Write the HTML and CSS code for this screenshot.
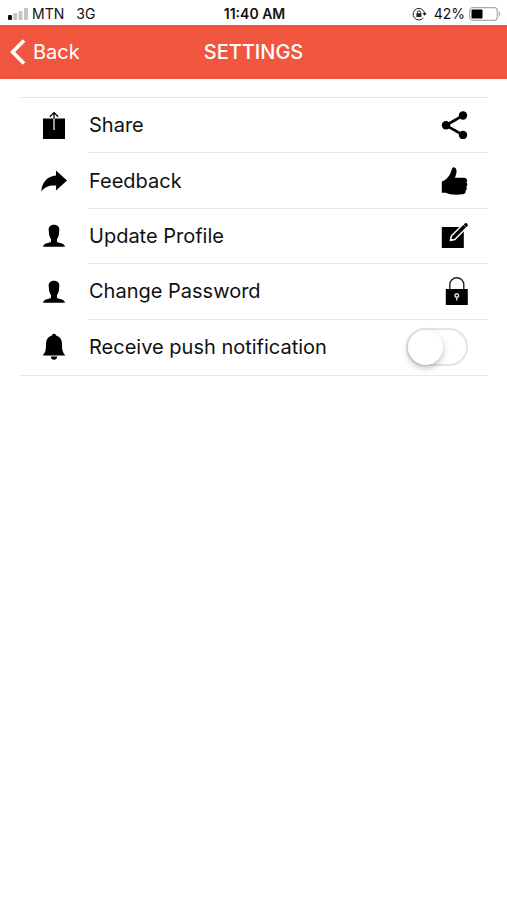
FILE: index.html
```html
<!DOCTYPE html>
<html lang="en">
<head>
    <meta charset="UTF-8">
    <meta name="viewport" content="width=device-width, initial-scale=1.0">
    <title>Settings</title>
    <link rel="stylesheet" href="styles.css">
</head>
<body>
    <div class="status-bar">
        <div class="status-left">
            <svg width="20" height="12" viewBox="0 0 20 12">
                <rect x="0" y="7" width="4" height="5" rx="1" fill="#111"/>
                <rect x="5.3" y="5" width="4" height="7" rx="1" fill="#c4c4c4"/>
                <rect x="10.6" y="3" width="4" height="9" rx="1" fill="#c4c4c4"/>
                <rect x="16" y="0" width="4" height="12" rx="1" fill="#c4c4c4"/>
            </svg>
            <span class="carrier">MTN</span>
            <span>3G</span>
        </div>
        <div class="status-time">11:40 AM</div>
        <div class="status-right">
            <svg width="15" height="14" viewBox="0 0 15 14" fill="none" stroke="#222">
                <path d="M11.3 11A5.8 5.8 0 1 1 12.6 6"/>
                <path d="M10.4 6h4.4l-2.2 2.8z" fill="#222" stroke="none"/>
                <rect x="4.4" y="6.2" width="5" height="3.8" fill="#222" stroke="none"/>
                <path d="M5.4 6.5V5.2a1.5 1.5 0 0 1 3 0v1.3"/>
            </svg>
            <span class="battery-text">42%</span>
            <svg width="32" height="14" viewBox="0 0 32 14">
                <rect x="0.7" y="0.7" width="27.6" height="12.6" rx="3" fill="#fff" stroke="#aaa" stroke-width="1.2"/>
                <rect x="2.5" y="2.5" width="11" height="9" rx="1" fill="#000"/>
                <path d="M29.8 4.6c2 .8 2 4 0 4.8z" fill="#aaa"/>
            </svg>
        </div>
    </div>

    <header class="header">
        <a href="#" class="back">
            <svg width="16" height="26" viewBox="0 0 16 26" fill="none" stroke="#fff" stroke-width="3.6">
                <path d="M14 1.5L2.6 13L14 24.5"/>
            </svg>
            Back
        </a>
        <h1>SETTINGS</h1>
    </header>

    <main>
        <ul class="settings">
            <li>
                <svg class="icon" viewBox="0 0 28 28">
                    <rect x="3" y="6.5" width="22" height="20.5"/>
                    <path d="M14 18V6.5" fill="none" stroke="#fff" stroke-width="1.2"/>
                    <path d="M14 6.5V0.8M9.8 4.8L14 0.6l4.2 4.2" fill="none" stroke="#000" stroke-width="1.3"/>
                </svg>
                <a href="#" class="row">
                    Share
                    <svg class="icon" viewBox="0 0 28 28">
                        <path d="M23 4.5L6 14.3L23 24" fill="none" stroke="#000" stroke-width="2.6"/>
                        <circle cx="23" cy="4.5" r="4.2"/>
                        <circle cx="6" cy="14.3" r="4.2"/>
                        <circle cx="23" cy="24" r="4.2"/>
                    </svg>
                </a>
            </li>
            <li>
                <svg class="icon" viewBox="0 0 28 28">
                    <path d="M16 3.5L27 13.5L16 23.5V18.5C9.5 18 5 19.5 1.2 24.5C2 15 7.5 9 16 8.5z"/>
                </svg>
                <a href="#" class="row">
                    Feedback
                    <svg class="icon" viewBox="0 0 28 28">
                        <path d="M1.8 14.5C6 13.5 10 8.5 11.5 3.5C12 .5 13 0 14.5.4C17.5 1.5 16.8 6.5 14.8 10.8H24C27 10.8 28 14 26.3 15.3C27.8 16.5 27.6 18.8 26.3 19.7C27.3 21 26.8 23 25.5 23.6C26.1 25.5 25 27 22.5 27.3C16 28.3 9 27.5 5.5 25.8H1.8z"/>
                    </svg>
                </a>
            </li>
            <li>
                <svg class="icon" viewBox="0 0 28 28">
                    <path d="M14 2.8C17.8 2.8 19.5 5 19.3 8.5L18.9 12.5C18.6 14.5 17.5 16 17 17.5V19.7C18 21.3 24.5 20.5 25 24.8H3C3.5 20.5 10 21.3 11 19.7V17.5C10.5 16 9.4 14.5 9.1 12.5L8.7 8.5C8.5 5 10.2 2.8 14 2.8z"/>
                </svg>
                <a href="#" class="row">
                    Update Profile
                    <svg class="icon" viewBox="0 0 28 28">
                        <rect x="1.8" y="5" width="22" height="21"/>
                        <path d="M10.5 18.3L11.3 14L23.5 1.8L27 5.3L14.8 17.5z" fill="#000" stroke="#fff" stroke-width="1.5"/>
                        <path d="M23.8 2.6L25.3 1.1Q28.4 1 27.6 4L26.2 5.2z"/>
                    </svg>
                </a>
            </li>
            <li>
                <svg class="icon" viewBox="0 0 28 28">
                    <path d="M14 2.8C17.8 2.8 19.5 5 19.3 8.5L18.9 12.5C18.6 14.5 17.5 16 17 17.5V19.7C18 21.3 24.5 20.5 25 24.8H3C3.5 20.5 10 21.3 11 19.7V17.5C10.5 16 9.4 14.5 9.1 12.5L8.7 8.5C8.5 5 10.2 2.8 14 2.8z"/>
                </svg>
                <a href="#" class="row">
                    Change Password
                    <svg class="icon" viewBox="0 0 28 28">
                        <path d="M9.8 12.5V7.5a7 6.8 0 0 1 14 0v5" fill="none" stroke="#222" stroke-width="1.4"/>
                        <rect x="5.8" y="12" width="22" height="16"/>
                        <circle cx="16.8" cy="18.5" r="1.8" fill="none" stroke="#ddd" stroke-width="1.4"/>
                        <path d="M16.8 20.5v3" stroke="#ddd" stroke-width="1.4"/>
                    </svg>
                </a>
            </li>
            <li>
                <svg class="icon" viewBox="0 0 28 28">
                    <path d="M14 .8C15.3 .8 15.9 1.5 16 2.5C20 3.5 22 6.8 22 11C22 16.5 22.5 19.8 25.5 22.5H2.5C5.5 19.8 6 16.5 6 11C6 6.8 8 3.5 12 2.5C12.1 1.5 12.7 .8 14 .8z"/>
                    <path d="M10.8 23.6H17.2C17 25.8 15.8 26.8 14 26.8S11 25.8 10.8 23.6z"/>
                </svg>
                <label class="row" for="push">
                    Receive push notification
                    <input type="checkbox" id="push" class="switch">
                </label>
            </li>
        </ul>
    </main>
</body>
</html>
```

FILE: styles.css
```css
body {
    margin: 0;
    background-color: #fff;
    color: #111;
    font-family: Inter, "Liberation Sans", sans-serif;
}

.status-bar {
    display: grid;
    grid-template-columns: 1fr auto 1fr;
    align-items: center;
    height: 25px;
    padding: 2px 6px 0 8px;
    box-sizing: border-box;
    font-size: 14px;
}

.status-left,
.status-right {
    display: flex;
    align-items: center;
}

.carrier {
    margin: 0 12px 0 4px;
}

.status-time {
    font-weight: 600;
}

.status-right {
    justify-content: flex-end;
}

.battery-text {
    margin: 0 4px 0 7px;
}

.header {
    display: grid;
    grid-template-columns: 1fr auto 1fr;
    align-items: center;
    height: 54px;
    padding: 0 10px;
    background-color: #f1573f;
    color: #fff;
}

.header h1 {
    margin: 0;
    font-size: 20px;
    font-weight: 500;
}

.back {
    display: flex;
    align-items: center;
    gap: 7px;
    color: #fff;
    font-size: 20px;
    text-decoration: none;
}

.settings {
    display: grid;
    grid-auto-rows: 1fr;
    min-height: 277px;
    margin: 18px 19px 0 20px;
    padding: 0;
    list-style: none;
    border-top: 1px solid #e8e8e8;
    border-bottom: 1px solid #e8e8e8;
}

.settings li {
    display: grid;
    grid-template-columns: 68px 1fr;
    align-items: center;
}

.icon {
    width: 28px;
    height: 28px;
    justify-self: center;
}

.row {
    display: flex;
    align-items: center;
    justify-content: space-between;
    align-self: stretch;
    padding: 0 20px 0 1px;
    color: #111;
    font-size: 20px;
    text-decoration: none;
    border-bottom: 1px solid #e8e8e8;
}

.settings li:last-child .row {
    border-bottom: none;
}

.switch {
    appearance: none;
    display: flex;
    align-items: center;
    width: 62px;
    height: 38px;
    margin: 0;
    border: 2px solid #e4e4e4;
    border-radius: 19px;
    background-color: #fff;
    cursor: pointer;
}

.switch::before {
    content: "";
    width: 35px;
    height: 35px;
    border-radius: 50%;
    background-color: #fff;
    box-shadow: 0 3px 6px rgba(0, 0, 0, 0.25);
}

.switch:checked {
    justify-content: flex-end;
    background-color: #4cd964;
}
```
